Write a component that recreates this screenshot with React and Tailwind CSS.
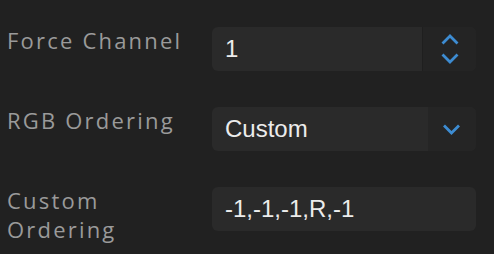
import { useState } from 'react';

const labelCls =
  "w-[212px] shrink-0 pl-[7px] -mt-[1px] text-[22px] leading-[29px] tracking-[2.2px] text-[#9a9a9a] font-['Open_Sans',sans-serif]";
const boxCls =
  "flex-1 h-[44px] flex items-stretch rounded-[6px] bg-[#2a2a2a] overflow-hidden font-['Liberation_Sans',Arial,sans-serif] text-[24px] text-[#ececec]";

function Chevron({ up, className }) {
  return (
    <svg viewBox="0 0 18 11" className={className} fill="none">
      <polyline
        points={up ? '1.5,9.5 9,2 16.5,9.5' : '1.5,1.5 9,9 16.5,1.5'}
        stroke="#3d8cd2"
        strokeWidth="2.8"
        strokeLinecap="butt"
        strokeLinejoin="miter"
      />
    </svg>
  );
}

export default function App() {
  const [channel] = useState('1');
  const [order] = useState('-1,-1,-1,R,-1');

  return (
    <div className="w-[494px] h-[254px] bg-[#212121] pt-[27px] pr-[18px] flex flex-col gap-[36px]">
      {/* Force Channel */}
      <div className="flex items-start">
        <div className={labelCls}>Force Channel</div>
        <div className={boxCls}>
          <div className="flex-1 flex items-center pl-[13px]">{channel}</div>
          <div className="w-[54px] bg-[#242424] border-l border-[#1f1f1f] flex flex-col items-center justify-center gap-[8px]">
            <Chevron up className="w-[18px] h-[11px]" />
            <Chevron className="w-[18px] h-[11px]" />
          </div>
        </div>
      </div>

      {/* RGB Ordering */}
      <div className="flex items-start">
        <div className={labelCls}>RGB Ordering</div>
        <div className={boxCls}>
          <div className="flex-1 flex items-center pl-[13px]">Custom</div>
          <div className="w-[48px] bg-[#252525] flex items-center justify-center">
            <Chevron className="w-[19px] h-[11px] mr-[1px]" />
          </div>
        </div>
      </div>

      {/* Custom Ordering */}
      <div className="flex items-start">
        <div className={labelCls}>
          Custom
          <br />
          Ordering
        </div>
        <div className={boxCls}>
          <div className="flex-1 flex items-center pl-[13px]">{order}</div>
        </div>
      </div>
    </div>
  );
}
